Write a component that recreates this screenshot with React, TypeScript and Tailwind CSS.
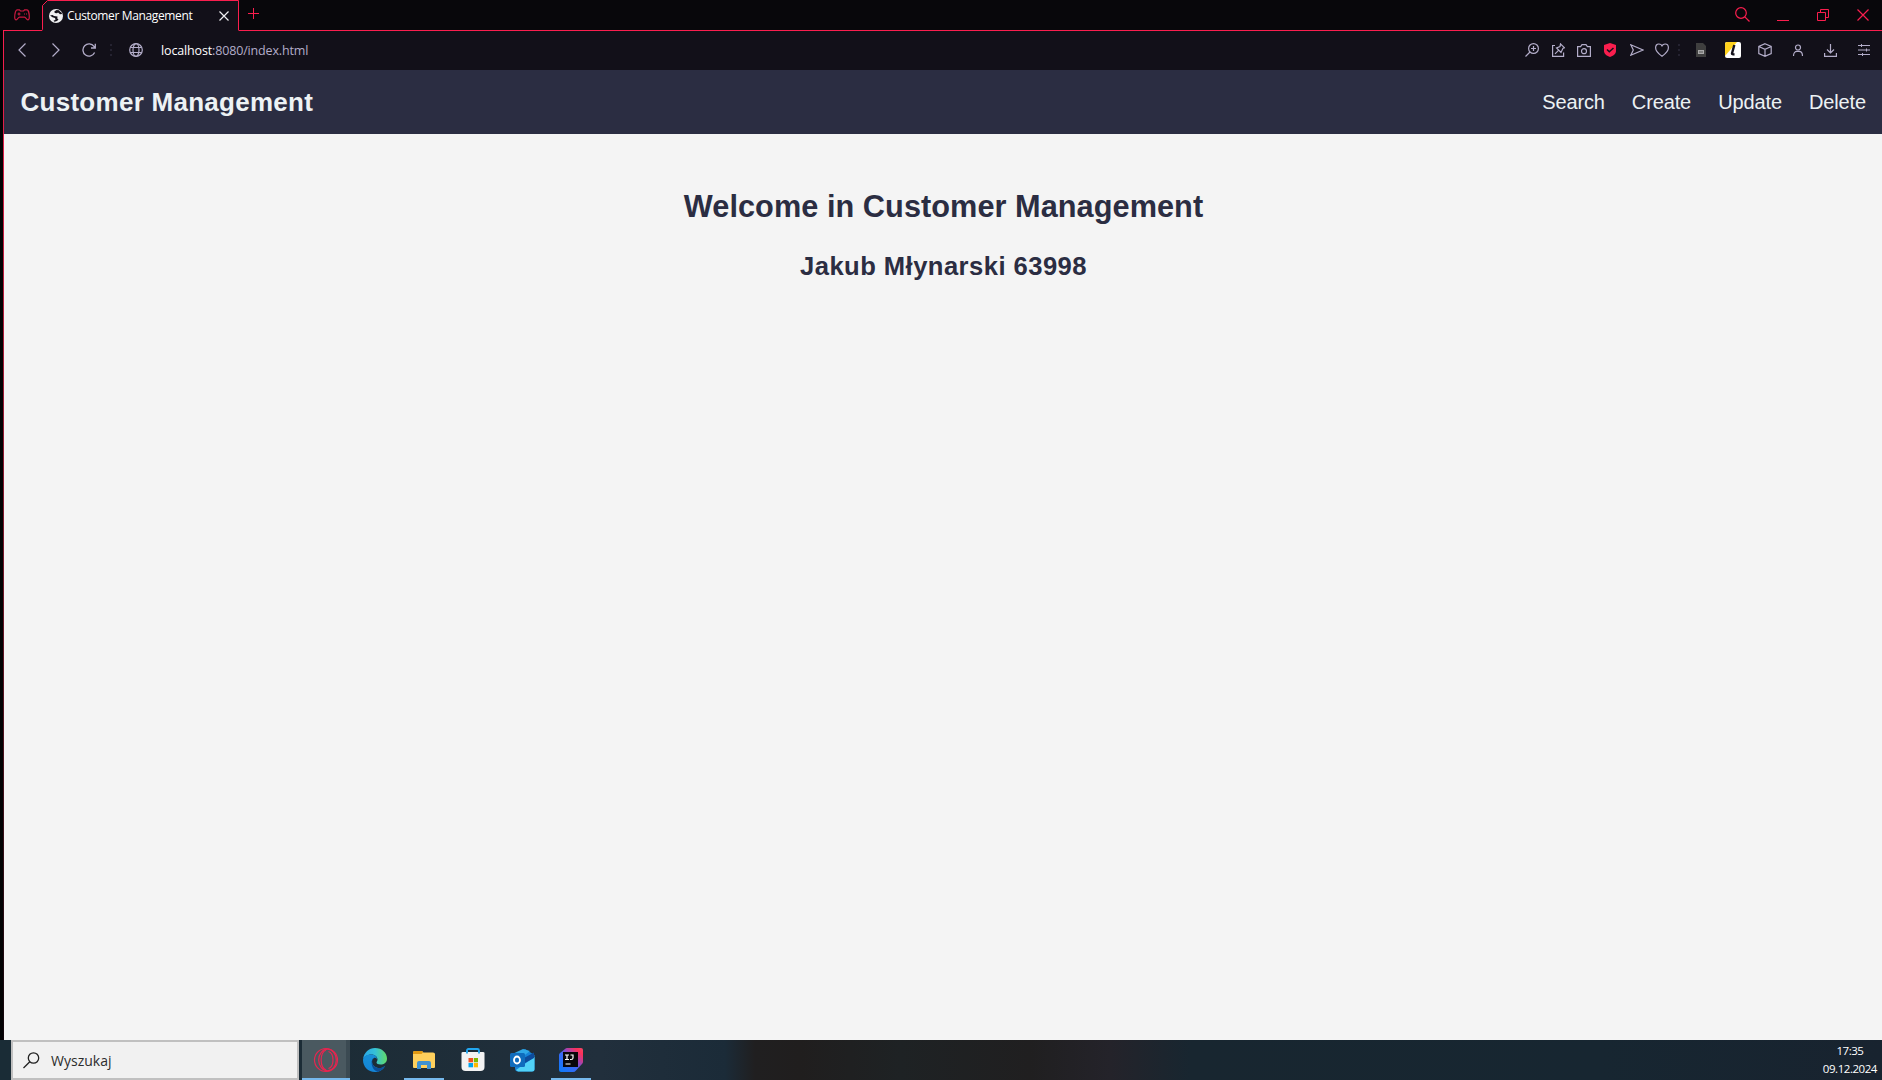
import React from "react";

const stroke = { fill: "none", stroke: "currentColor", strokeWidth: 1.2 } as const;

function Icon({ w = 16, h = 16, className = "", children }: { w?: number; h?: number; className?: string; children: React.ReactNode }) {
  return (
    <svg width={w} height={h} viewBox={`0 0 ${w} ${h}`} className={`shrink-0 ${className}`} {...stroke}>
      {children}
    </svg>
  );
}

function TabStrip() {
  return (
    <div className="flex h-[31px] bg-[#08070b] text-[#fa1e4e]">
      <div className="ml-[3px] flex w-[39px] items-center border-b border-[#fa1e4e] pl-[11px]">
        <Icon w={16} h={12} className="-mt-[1px] opacity-80">
          <path d="M3 .8h2.400l1 1.200h3.200l1-1.200H13c1.200 0 2.300 3.500 2.300 7.500 0 1.700-.6 2.500-1.500 2.500-1.300 0-1.800-2.600-3.300-2.600h-5C4 8.200 3.500 10.800 2.200 10.800.9 10.800.7 9.500.7 8.300.7 4.300 1.800.8 3 .8z" />
          <path d="M5 3.500v3M3.500 5h3M10 5h1M12 5h1" />
        </Icon>
      </div>
      <div className="relative flex w-[197px] items-center bg-[#121019]">
        <svg width="197" height="31" className="absolute left-0 top-0" fill="none">
          <path d="M0 0h6L0 6z" fill="#08070b" />
          <path d="M0 30.500.5 29.500V5.500L5.500.5H196.500V30.500" stroke="#fa1e4e" />
        </svg>
        <svg width="14" height="14" viewBox="0 0 14 14" className="ml-[7px] shrink-0">
          <circle cx="7" cy="7" r="7" fill="#f0f0f2" />
          <path d="M7.500 1 5.300 2.500 5.800 4 8 4.300 9 3.500 11 5.300 13 5 12.700 3.800 11 2.500 10 1.200zM1 6.500 3.500 6 5 7 8.500 7.500 8.300 9.500 9.500 10.500 8 12 5.500 12.800 4.500 11.800 6.500 10.800 6 9 3.500 8.300z" fill="#121019" />
        </svg>
        <span className="ml-[4px] whitespace-nowrap font-['Open_Sans',sans-serif] text-[12px] leading-none tracking-[-0.36px] text-white">Customer Management</span>
        <Icon w={10} h={10} className="ml-auto mr-[10px] text-[#f0f0f2]"><path d="M.5.5l9 9M9.500.5l-9 9" /></Icon>
      </div>
      <div className="flex flex-1 items-center border-b border-[#fa1e4e]">
        <Icon w={11} h={11} className="-mt-[3px] ml-[9px]"><path d="M5.500 0v11M0 5.500h11" strokeWidth="1" /></Icon>
        <Icon w={15} h={15} className="-mt-[2px] ml-auto"><circle cx="6" cy="6" r="5.300" /><path d="M9.800 9.800l4.700 4.700" /></Icon>
        <Icon w={12} h={12} className="ml-[27px]"><path d="M0 11.500h12" strokeWidth="1" /></Icon>
        <Icon w={12} h={12} className="ml-[28px]"><path d="M.5 3.500h8v8h-8zM3.500 3.500v-3h8v8h-3" strokeWidth="1" /></Icon>
        <Icon w={12} h={12} className="ml-[28px] mr-[13px]"><path d="M.5.5l11 11M11.500.5l-11 11" /></Icon>
      </div>
    </div>
  );
}

function Dots() {
  return (
    <svg width="2" height="12" className="shrink-0" fill="#252331"><path d="M0 0h2v2H0zM0 5h2v2H0zM0 10h2v2H0z" /></svg>
  );
}

function Toolbar() {
  return (
    <div className="flex h-[39px] items-center bg-[#121019] pb-px text-[#b3adc9]">
      <Icon w={8} h={14} className="ml-[14px]"><path d="M7.500.5L1 7l6.500 6.500" strokeWidth="1.200" /></Icon>
      <Icon w={8} h={14} className="ml-[26px]"><path d="M.5.5L7 7 .5 13.500" strokeWidth="1.200" /></Icon>
      <Icon w={14} h={14} className="ml-[22px]"><path d="M12.600 9.500A6.100 6.100 0 1 1 12 3.400L13 5M13.300.7V5H9" strokeWidth="1.300" /></Icon>
      <span className="ml-[14px] flex"><Dots /></span>
      <Icon w={14} h={14} className="ml-[17px]">
        <circle cx="7" cy="7" r="6.300" /><ellipse cx="7" cy="7" rx="3" ry="6.300" /><path d="M1.500 4.500h11M1.500 9.500h11" />
      </Icon>
      <span className="ml-[18px] mt-[2px] whitespace-nowrap font-['Open_Sans',sans-serif] text-[12.500px] leading-none tracking-[-0.15px]"><span className="text-white">localhost</span>:8080/index.html</span>

      <Icon w={14} h={14} className="ml-auto"><circle cx="8.500" cy="5.500" r="4.900" /><path d="M5 9L.5 13.500M8.500 3v5M6 5.500h5" /></Icon>
      <Icon w={13} h={14} className="ml-[13px]"><path d="M3 2.500H.6v10.800h11V9.500M8.500.8l4 4-1.500.5-2 4.200-4.500-4.500 3.500-1.500zM6.500 7.300L3 10.800" /></Icon>
      <Icon w={14} h={13} className="ml-[12px]"><path d="M.6 2.600h3L5 .7h4l1.400 1.900h3v9.800H.6z" /><circle cx="7" cy="7.200" r="2.500" /></Icon>
      <svg width="12" height="14" className="ml-[13px] shrink-0"><path d="M6 0l6 2v6c0 3-3 5-6 6-3-1-6-3-6-6V2z" fill="#fa1e4e" /><path d="M3 6.500l2.300 2.300L9.500 5" fill="none" stroke="#121019" strokeWidth="1.500" /></svg>
      <Icon w={14} h={12} className="ml-[14px]"><path d="M.8.8L13 6 .8 11.200 3.300 6z" /></Icon>
      <Icon w={14} h={14} className="ml-[11px]"><path d="M7 13.300C3 10.500.6 8 .6 4.800.6 2.500 2 1 3.800 1 5.500 1 7 2.200 7 3.500 7 2.200 8.500 1 10.200 1c1.800 0 3.200 1.500 3.200 3.800C13.400 8 11 10.500 7 13.300z" /></Icon>
      <span className="ml-[9px] flex"><Dots /></span>
      <svg width="10" height="14" className="ml-[16px] shrink-0"><path d="M0 0h7l3 3v11H0z" fill="#3f3f3f" /><path d="M2 7h6v4H2z" fill="#aaa" /><path d="M3 9h4" stroke="#555" /></svg>
      <svg width="16" height="16" className="ml-[19px] shrink-0"><rect width="16" height="16" rx="2" fill="#fff" /><path d="M2 0h10L0 14V2a2 2 0 0 1 2-2z" fill="#ffd21e" /><path d="M9.300 3L7 11.500q0 1 2.500.8" fill="none" stroke="#15121c" strokeWidth="2.400" /></svg>
      <Icon w={14} h={14} className="ml-[17px]"><path d="M7 .7l6.200 2.800v7L7 13.300.8 10.500v-7zM.8 3.500L7 6.300l6.200-2.800M7 6.300v7" /></Icon>
      <Icon w={12} h={13} className="ml-[20px]"><circle cx="6" cy="3.500" r="2.500" /><path d="M1.500 12c0-3 1.500-4.700 3.500-4.700h2c2 0 3.500 1.700 3.500 4.700" /></Icon>
      <Icon w={13} h={13} className="ml-[20px]"><path d="M6.500 0v8.500M3 5.500l3.500 3.500L10 5.500M.6 9v3.400h11.800V9" /></Icon>
      <Icon w={12} h={12} className="ml-[21px] mr-[12px]"><path d="M0 1.500h12M0 6h12M0 10.500h12M3.500 0v3M8.500 4.500v3M4.500 9v3" strokeWidth="1" /></Icon>
    </div>
  );
}

function Page() {
  return (
    <main className="flex flex-1 flex-col bg-[#f4f4f4] font-['Liberation_Sans',Arial,sans-serif]">
      <header className="flex h-[64px] items-center justify-between bg-[#2b2d42] pl-[16.500px] pr-[16px] text-[#edf2f4]">
        <h1 className="text-[26px] font-bold leading-[32px] tracking-[0.27px]">Customer Management</h1>
        <nav className="flex gap-[27px] text-[20px] leading-[24px] tracking-[-0.12px]">
          <a>Search</a><a>Create</a><a>Update</a><a>Delete</a>
        </nav>
      </header>
      <section className="flex flex-col items-center pt-[55px] pl-px font-bold text-[#2b2d42]">
        <h2 className="text-[30.700px] leading-[36px] tracking-[0.05px]">Welcome in Customer Management</h2>
        <h3 className="mt-[26px] text-[25.600px] leading-[30px] tracking-[0.45px]">Jakub Młynarski 63998</h3>
      </section>
    </main>
  );
}

function Opera() {
  return (
    <svg width="26" height="26" fill="none" stroke="#e8254f" strokeWidth="1.200"><circle cx="13" cy="13" r="11.500" /><ellipse cx="14.500" cy="13" rx="8.800" ry="10.800" /><path d="M15.500 4.500c6 2 6 15 0 17M13 3C6.500 6 6.500 20 13 23" /></svg>
  );
}

function Edge() {
  return (
    <svg width="24" height="24" viewBox="0 0 24 24">
      <defs>
        <linearGradient id="edgeTop"><stop stopColor="#2aa7e8" /><stop offset=".5" stopColor="#35c1d8" /><stop offset="1" stopColor="#62dc68" /></linearGradient>
        <linearGradient id="edgeLow" x2="0" y2="1"><stop stopColor="#1690d8" /><stop offset="1" stopColor="#1484d6" /></linearGradient>
      </defs>
      <path d="M0 11C1 4.500 6 0 12 0c7 0 12 5 12 10.500 0 4-3 6-6.500 6-2.500 0-4-1-4-2 0-.8 1-1.200 1-3C14.500 9 12 6.500 8.500 6.500 4 6.500.8 9 0 11z" fill="url(#edgeTop)" />
      <path d="M0 12c0-3.500 4-5.500 8-5.500 3.500 0 6 2 6 4.500-1-1-2-1.500-3-1-4 2-2 9 4 10 3 .5 5-.5 7-2-2 4-6 6-10 6C5 24 0 18.500 0 12z" fill="url(#edgeLow)" />
      <path d="M10 10c-3 4-1 12 4.500 13.700C17.500 23.300 20.500 21 22 18c-2 1.500-4 2.300-7 2-5-1-7-5-5-10z" fill="#0c4f97" />
    </svg>
  );
}

function Explorer() {
  return (
    <svg width="22" height="18"><path d="M0 1.500Q0 0 1.500 0H9l1.500 1.500H20Q22 1.500 22 3v13q0 1-1 1H1q-1 0-1-1z" fill="#ffd05c" /><path d="M0 3V1.500Q0 0 1.500 0H9l1 1.500-1.500 1.500z" fill="#e29a13" /><path d="M4 18v-6q0-2 2-2h10q2 0 2 2v6h-4v-4H8v4z" fill="#3f92d2" /></svg>
  );
}

function Store() {
  return (
    <svg width="24" height="24"><path d="M6 6V2.500Q6 1 7.500 1h9Q18 1 18 2.500V6" fill="none" stroke="#22a7f0" strokeWidth="1.800" /><path d="M2 4h20q1.500 0 1.500 1v14q0 4-4 4h-15q-4 0-4-4V5q0-1 1.500-1z" fill="#f3f3f3" /><path d="M6 3v2.500M18 3v2.500" stroke="#22a7f0" strokeWidth="1.800" /><path d="M7.500 10H12v4.300H7.500z" fill="#f25022" /><path d="M12.800 10h4.200v4.300h-4.200z" fill="#7fba00" /><path d="M7.500 15H12v4.300H7.500z" fill="#00a4ef" /><path d="M12.800 15h4.200v4.300h-4.200z" fill="#ffb900" /></svg>
  );
}

function Outlook() {
  return (
    <svg width="25" height="23"><path d="M5 6L15 0l9.500 6v14q0 2.500-2.500 2.500H8Q5 22.500 5 19z" fill="#1683d8" /><path d="M4.500 4L13 0l7 2-9 7z" fill="#2fa8e8" /><path d="M24.500 8v12q0 2.500-2.500 2.500H8L6 21z" fill="#51d2f7" /><path d="M14 9L24 3.500V9L14 14.500z" fill="#0d4c9c" /><rect y="4" width="15" height="14" rx="1.500" fill="#0f6cbd" /><ellipse cx="7" cy="11" rx="3" ry="3.500" fill="none" stroke="#fff" strokeWidth="1.800" /></svg>
  );
}

function Idea() {
  return (
    <svg width="24" height="24">
      <defs><linearGradient id="idea" x1="0" y1="1" x2="1" y2="0"><stop stopColor="#087cfa" /><stop offset=".45" stopColor="#3c67f5" /><stop offset=".62" stopColor="#a044b4" /><stop offset=".85" stopColor="#ff3158" /><stop offset="1" stopColor="#f04a68" /></linearGradient></defs>
      <path d="M0 7q0-1 1-2L6 1q1-1 2-1h14q2 0 2 2v12q0 1-1 2l-6 6.500q-1 1.500-3 1.500H2q-2 0-2-2z" fill="url(#idea)" />
      <path d="M4 4h15v15H4z" fill="#08070b" />
      <path d="M6 7h4M8 7v4.500M6 11.500h4M11.500 7h2.500v3q0 1.500-2 1.500h-1M6.500 16h5" stroke="#fff" strokeWidth="1.200" fill="none" />
    </svg>
  );
}

function Task({ children, className = "" }: { children: React.ReactNode; className?: string }) {
  return <div className={`flex h-full w-[40px] shrink-0 items-center justify-center border-b-2 pt-[2px] ${className}`}>{children}</div>;
}

function Taskbar() {
  return (
    <footer className="flex h-[40px] shrink-0 bg-[linear-gradient(90deg,#1a2c36_0px,#1c2c36_320px,#212f3c_600px,#1b2b38_725px,#201f20_755px,#201e1e_800px,#1e2224_900px,#201f20_1030px,#24232a_1110px,#182630_1190px,#172631_1600px,#18232f_1882px)]">
      <div className="ml-[11px] flex w-[288px] items-center border-2 border-[#c0c0c0] bg-[#f1f1f1] text-[#2d2d2d]">
        <svg width="17" height="17" className="ml-[10px]" fill="none" stroke="#222" strokeWidth="1.300"><circle cx="10.500" cy="6" r="5.200" /><path d="M6.800 9.700L.5 16" /></svg>
        <span className="ml-[11px] mt-[2px] font-['Open_Sans',sans-serif] text-[14px] leading-none tracking-[0.020px]">Wyszukaj</span>
      </div>
      <div className="ml-[3px] flex w-[48px] border-b-2 border-[#76b9ed] bg-[#3b4a52]">
        <div className="flex w-[44px] items-center justify-center bg-[#4a5960] pl-[4px] pt-[2px]"><Opera /></div>
      </div>
      <div className="ml-[5px] flex gap-[9px]">
        <Task className="border-transparent"><Edge /></Task>
        <Task className="border-[#76b9ed]"><Explorer /></Task>
        <Task className="border-transparent"><Store /></Task>
        <Task className="border-transparent"><Outlook /></Task>
        <Task className="border-[#76b9ed]"><Idea /></Task>
      </div>
      <div className="ml-auto mr-[5px] flex flex-col items-center pt-[2px] font-['Open_Sans',sans-serif] text-[11.500px] leading-[18px] tracking-[-0.450px] text-white">
        <span>17:35</span><span>09.12.2024</span>
      </div>
    </footer>
  );
}

export default function App() {
  return (
    <div className="flex h-[1080px] w-[1882px] flex-col overflow-hidden">
      <TabStrip />
      <div className="flex flex-1">
        <div className="flex w-[4px] justify-end bg-[#020203]">
          <div className="w-px bg-linear-to-b from-[#fa1e4e] to-[#10050a]" />
        </div>
        <div className="flex flex-1 flex-col">
          <Toolbar />
          <Page />
        </div>
      </div>
      <Taskbar />
    </div>
  );
}
